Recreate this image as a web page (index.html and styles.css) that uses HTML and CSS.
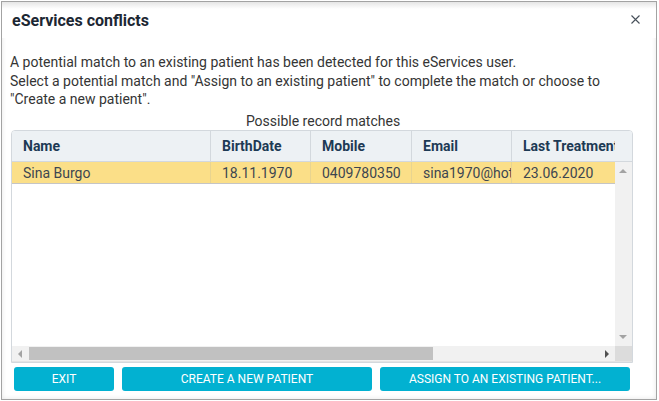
FILE: index.html
```html
<!DOCTYPE html>
<html>
<head>
<meta charset="utf-8">
<link rel="stylesheet" href="styles.css">
</head>
<body>
<div class="dialog">
  <div class="titlebar">
    <span class="title">eServices conflicts</span>
    <svg class="close" width="9" height="9" viewBox="0 0 9 9"><path d="M0.5 0.5 L8.5 8.5 M8.5 0.5 L0.5 8.5" stroke="#47505a" stroke-width="1.1" fill="none"/></svg>
  </div>
  <div class="message">
    <p>A potential match to an existing patient has been detected for this eServices user.</p>
    <p>Select a potential match and "Assign to an existing patient" to complete the match or choose to "Create a new patient".</p>
  </div>
  <div class="caption">Possible record matches</div>
  <div class="grid">
    <div class="grid-head">
      <div class="head-cells">
        <div class="cell c-name">Name</div>
        <div class="cell c-date">BirthDate</div>
        <div class="cell c-mob">Mobile</div>
        <div class="cell c-mail">Email</div>
        <div class="cell c-last">Last Treatment</div>
      </div>
    </div>
    <div class="grid-main">
      <div class="grid-body">
        <div class="row selected">
          <div class="cell c-name">Sina Burgo</div>
          <div class="cell c-date">18.11.1970</div>
          <div class="cell c-mob">0409780350</div>
          <div class="cell c-mail">sina1970@hotmail.com</div>
          <div class="cell c-last">23.06.2020</div>
        </div>
      </div>
      <div class="vscroll">
        <span class="arr up"></span>
        <span class="arr down"></span>
      </div>
    </div>
    <div class="hscroll-row">
      <div class="hscroll">
        <span class="arr left"></span>
        <div class="thumb"></div>
        <span class="arr right"></span>
      </div>
      <div class="corner"></div>
    </div>
  </div>
  <div class="buttons">
    <button class="btn b-exit">EXIT</button>
    <button class="btn b-wide">CREATE A NEW PATIENT</button>
    <button class="btn b-wide">ASSIGN TO AN EXISTING PATIENT...</button>
  </div>
</div>
</body>
</html>
```

FILE: styles.css
```css
* { box-sizing: border-box; }
html, body { margin: 0; padding: 0; background: #ffffff; }
body { padding: 1px; font-family: Roboto, "Liberation Sans", sans-serif; }

.dialog {
  width: 656px;
  height: 399px;
  border: 1px solid #a3a3a3;
  background: #ffffff;
  box-shadow: inset 0 0 5px rgba(0,0,0,0.10);
  display: flex;
  flex-direction: column;
}

.titlebar {
  height: 36px;
  display: flex;
  align-items: center;
  justify-content: space-between;
  padding: 0 16px 0 10px;
  background: linear-gradient(to bottom, #e6e6e6 0px, #ffffff 7px);
}
.title {
  font-size: 16px;
  font-weight: 700;
  color: #1c2733;
}
.close {
  display: block;
  margin-top: -2px;
}

.message {
  margin-top: 15px;
  padding: 0 8px;
  font-size: 14px;
  line-height: 18.5px;
  color: #353535;
}
.message p { margin: 0; }

.caption {
  margin-top: 3px;
  text-align: center;
  font-size: 14px;
  line-height: 18px;
  color: #353535;
  padding-right: 12px;
}

.grid {
  margin-left: 9px;
  width: 622px;
  height: 233px;
  border: 1px solid #d3d8dd;
  border-radius: 4px 4px 0 0;
  display: flex;
  flex-direction: column;
  overflow: hidden;
}
.grid-head {
  height: 31px;
  background: #edf1f4;
  border-bottom: 1px solid #d3d8dd;
  flex: none;
}
.head-cells {
  width: 603px;
  height: 30px;
  display: flex;
  overflow: hidden;
}
.head-cells .cell {
  font-size: 14px;
  font-weight: 700;
  color: #1d3a55;
  line-height: 30px;
  border-right: 1px solid #d3d8dd;
}
.cell {
  flex: none;
  padding: 0 11px;
  white-space: nowrap;
  overflow: hidden;
}
.c-name { width: 199px; }
.c-date { width: 100px; }
.c-mob { width: 101px; }
.c-mail { width: 100px; }
.c-last { width: 110px; border-right: none !important; }

.grid-main {
  flex: 1;
  display: flex;
  min-height: 0;
}
.grid-body {
  width: 603px;
  overflow: hidden;
  background: #ffffff;
}
.row {
  display: flex;
  height: 22px;
  border-bottom: 1px solid #c5c5c5;
}
.row.selected { background: #fbdf88; }
.row .cell {
  font-size: 14px;
  line-height: 22px;
  color: #3d4650;
  border-right: 1px solid #e8d490;
}

.vscroll {
  width: 17px;
  background: #f1f1f1;
  position: relative;
}
.arr {
  position: absolute;
  width: 0;
  height: 0;
}
.arr.up {
  left: 4px; top: 7px;
  border-left: 4px solid transparent;
  border-right: 4px solid transparent;
  border-bottom: 4px solid #a3a3a3;
}
.arr.down {
  left: 4px; bottom: 7px;
  border-left: 4px solid transparent;
  border-right: 4px solid transparent;
  border-top: 4px solid #a3a3a3;
}

.hscroll-row {
  height: 16px;
  display: flex;
  flex: none;
  border-bottom: 1px solid #e4e4e4;
}
.hscroll {
  width: 603px;
  background: #f1f1f1;
  position: relative;
  display: flex;
  align-items: center;
}
.thumb {
  margin-left: 17px;
  width: 404px;
  height: 13px;
  background: #c1c1c1;
}
.arr.left {
  left: 6px; top: 4px;
  border-top: 4px solid transparent;
  border-bottom: 4px solid transparent;
  border-right: 4px solid #a3a3a3;
}
.arr.right {
  right: 6px; top: 4px;
  border-top: 4px solid transparent;
  border-bottom: 4px solid transparent;
  border-left: 4px solid #505050;
}
.corner {
  flex: 1;
  background: #dcdcdc;
}

.buttons {
  margin-top: 4px;
  padding-left: 12px;
  display: flex;
  gap: 8px;
}
.btn {
  height: 24px;
  border: none;
  border-radius: 3px;
  background: #02b1d1;
  color: #ffffff;
  font-family: Roboto, "Liberation Sans", sans-serif;
  font-size: 12px;
  padding: 0;
  cursor: pointer;
}
.b-exit { width: 100px; }
.b-wide { width: 250px; }
```
